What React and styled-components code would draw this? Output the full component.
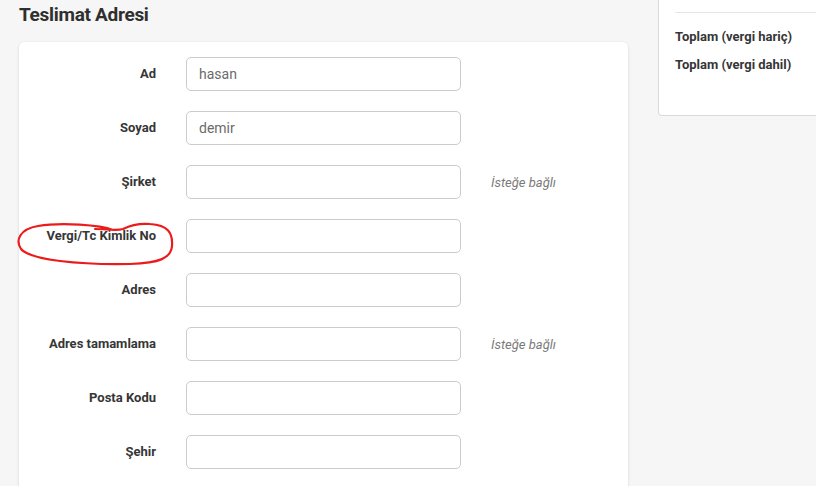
import React from 'react';
import styled, { createGlobalStyle } from 'styled-components';

const GlobalStyle = createGlobalStyle`
	html, body {
		margin: 0;
		padding: 0;
		background: #f6f6f6;
		overflow: hidden;
		font-family: Roboto, "Noto Sans", Arial, sans-serif;
	}
`;

const fields = [
	{ label: 'Ad', value: 'hasan' },
	{ label: 'Soyad', value: 'demir' },
	{ label: 'Şirket', value: '', optional: true },
	{ label: 'Vergi/Tc Kimlik No', value: '', marked: true },
	{ label: 'Adres', value: '' },
	{ label: 'Adres tamamlama', value: '', optional: true },
	{ label: 'Posta Kodu', value: '' },
	{ label: 'Şehir', value: '' },
];

// hand drawn red circle around the tax number label
const Scribble = () => (
	<Mark viewBox="15 215 163 51" width="163" height="51">
		<path
			d="M113 227 C100 222, 62 219, 38 223 C20 226, 15 237, 21 246 C30 257, 80 262, 130 261 C160 260, 171 255, 172 243 C173 230, 168 222, 150 221 C138 220, 131 222, 123 226 C117 228, 106 226, 95 226"
			fill="none"
			stroke="#ec1b1b"
			strokeWidth="2.2"
			strokeLinecap="round"
			strokeLinejoin="round"
		/>
	</Mark>
);

const App = () => {
	return (
		<>
			<GlobalStyle />
			<Page>
				<Main>
					<Title>Teslimat Adresi</Title>
					<FormCard>
						{fields.map((f) => (
							<Row key={f.label}>
								<Label>
									{f.label}
									{f.marked && <Scribble />}
								</Label>
								<Input defaultValue={f.value} />
								{f.optional ? <Hint>İsteğe bağlı</Hint> : <span />}
							</Row>
						))}
					</FormCard>
				</Main>
				<Sidebar>
					<Totals>
						<TotalLine>Toplam (vergi hariç)</TotalLine>
						<TotalLine>Toplam (vergi dahil)</TotalLine>
					</Totals>
				</Sidebar>
			</Page>
		</>
	);
};

const Page = styled.div`
	display: flex;
	align-items: flex-start;
	gap: 30px;
	padding-left: 19px;
	width: 900px;
`;

const Main = styled.div`
	width: 609px;
	flex-shrink: 0;
`;

const Title = styled.h1`
	margin: 0;
	padding-top: 3px;
	height: 39px;
	font-size: 19px;
	line-height: 24px;
	font-weight: 700;
	letter-spacing: -0.3px;
	color: #2f2f2f;
`;

const FormCard = styled.div`
	background: #fff;
	border-radius: 5px;
	box-shadow: 0 1px 3px rgba(0, 0, 0, 0.12), 0 0 1px rgba(0, 0, 0, 0.08);
	padding: 15px 0 40px;
	display: flex;
	flex-direction: column;
	gap: 20px;
`;

const Row = styled.div`
	display: grid;
	grid-template-columns: 137px 275px auto;
	column-gap: 30px;
	align-items: center;
	height: 34px;
`;

const Label = styled.label`
	position: relative;
	top: -1px;
	text-align: right;
	font-size: 13px;
	font-weight: 700;
	color: #363636;
`;

const Mark = styled.svg`
	position: absolute;
	left: -4px;
	top: -10px;
	pointer-events: none;
	overflow: visible;
`;

const Input = styled.input`
	box-sizing: border-box;
	width: 275px;
	height: 34px;
	border: 1px solid #cbcbcb;
	border-radius: 5px;
	padding: 0 12px;
	font-family: Roboto, Arial, sans-serif;
	font-size: 14px;
	color: #6b6b6b;
	background: #fff;
	outline: none;
`;

const Hint = styled.span`
	font-size: 13px;
	font-style: italic;
	color: #7a7a7a;
`;

const Sidebar = styled.div`
	width: 200px;
	flex-shrink: 0;
`;

const Totals = styled.div`
	background: #fff;
	border: 1px solid #d9d9d9;
	border-top: none;
	border-radius: 0 0 4px 4px;
	padding: 12px 0 36px 16px;

	&::before {
		content: '';
		display: block;
		border-top: 1px solid #e6e6e6;
		margin-bottom: 10px;
	}
`;

const TotalLine = styled.div`
	font-size: 13px;
	font-weight: 700;
	line-height: 28px;
	color: #363636;
`;

export default App;
